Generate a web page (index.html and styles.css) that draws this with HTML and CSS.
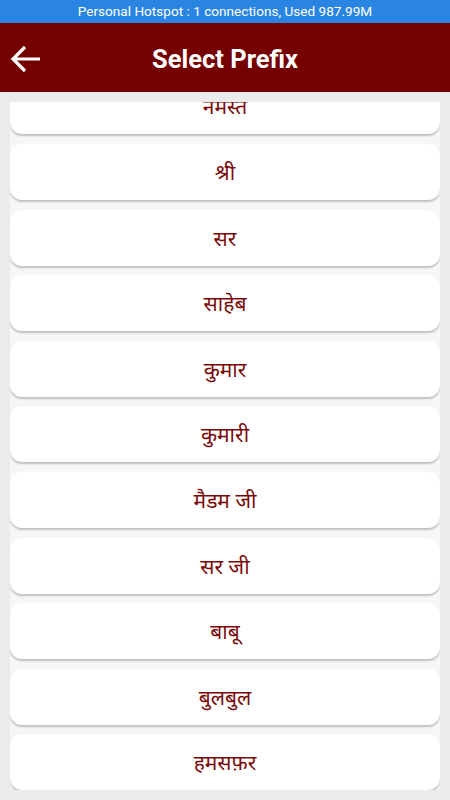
FILE: index.html
```html
<!DOCTYPE html>
<html lang="en">
<head>
  <meta charset="UTF-8" />
  <meta name="viewport" content="width=device-width, initial-scale=1.0" />
  <title>Select Prefix</title>
  <link rel="stylesheet" href="styles.css">
</head>
<body>
  <div class="status-bar">Personal Hotspot : 1 connections, Used 987.99M</div>

  <header class="app-bar">
    <button class="back-btn" aria-label="Back">
      <svg width="32" height="30" viewBox="0 0 32 30">
        <path d="M31 15H4M16 3L4 15l12 12" fill="none" stroke="#fff" stroke-width="3.2"/>
      </svg>
    </button>
    <h1>Select Prefix</h1>
  </header>

  <div class="prefix-list">
    <ul>
      <li>नमस्ते</li>
      <li>श्री</li>
      <li>सर</li>
      <li>साहेब</li>
      <li>कुमार</li>
      <li>कुमारी</li>
      <li>मैडम जी</li>
      <li>सर जी</li>
      <li>बाबू</li>
      <li>बुलबुल</li>
      <li>हमसफ़र</li>
    </ul>
  </div>
</body>
</html>
```

FILE: styles.css
```css
body {
  margin: 0;
  width: 450px;
  height: 800px;
  overflow: hidden;
  background: #ebebeb;
  font-family: Roboto, 'Noto Sans', sans-serif;
}

.status-bar {
  height: 23px;
  line-height: 23px;
  background: #2a85e2;
  color: #fff;
  font-size: 13.6px;
  text-align: center;
}

.app-bar {
  height: 69px;
  background: #740000;
  display: flex;
  align-items: center;
}

.back-btn {
  background: none;
  border: 0;
  padding: 0;
  margin: 2px 0 0 9px;
  width: 32px;
  height: 30px;
  cursor: pointer;
}

.app-bar h1 {
  flex: 1;
  margin: 3px 0 0;
  padding-right: 41px;
  text-align: center;
  color: #fff;
  font-size: 25.5px;
  font-weight: bold;
}

.prefix-list {
  margin: 10px 10px 0;
  height: 688px;
  overflow: hidden;
  background: #f6f6f6;
}

.prefix-list ul {
  list-style: none;
  margin: -23.6px 0 0;
  padding: 0;
  display: flex;
  flex-direction: column;
  gap: 9.6px;
}

.prefix-list li {
  height: 56px;
  display: flex;
  align-items: center;
  justify-content: center;
  background: #fff;
  border-radius: 12px;
  box-shadow: 0 2px 2px rgba(0, 0, 0, 0.22);
  color: #7a0a0a;
  font-family: 'Noto Sans', 'Noto Sans Devanagari', sans-serif;
  font-size: 21px;
}
```
